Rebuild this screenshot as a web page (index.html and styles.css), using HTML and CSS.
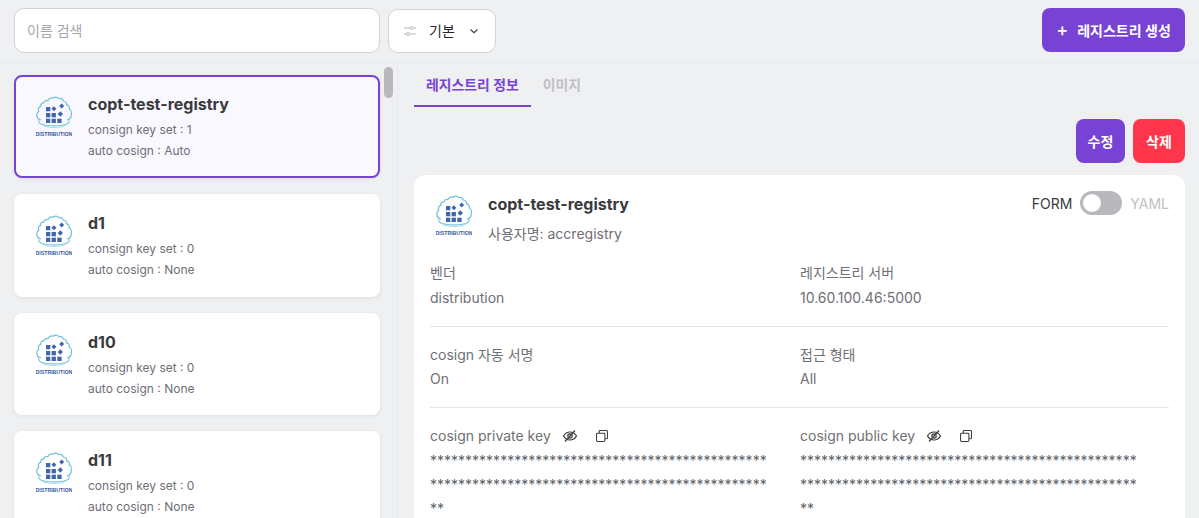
FILE: index.html
```html
<!DOCTYPE html>
<html lang="ko">
<head>
<meta charset="utf-8">
<title>레지스트리</title>
<link rel="stylesheet" href="styles.css">
</head>
<body>
<svg class="defs" width="0" height="0" aria-hidden="true">
  <symbol id="dist" viewBox="0 0 36 42">
    <path d="M5 24C2 23.500 .7 21 .8 18.500 .9 17 1.600 16 2.800 15.200 1.800 13.200 2.600 11 4.800 10.400 4.400 8.400 5.600 6.800 7.800 6.800 8.400 5 10 4.200 12 4.600 13 2.600 15 1.600 17 2.200 19 .8 21.400 1 22.800 2.600 24.800 2.200 26.600 3.200 27.200 5 29.400 5.200 30.800 6.800 30.600 8.800 32.600 9.200 33.800 11 33.200 13 35 14 36 16.500 35.200 18.500 35.400 21 33.600 23.400 31 24" fill="none" stroke="#6fbfdc" stroke-width="1.200"/>
    <path d="M3 24.500C1.500 28 8 29.800 18 29.800S34.500 28 33 24.500" fill="none" stroke="#7cc5df" stroke-width="1.200"/>
    <path d="M6.500 29.500C10 32 26 32 29.500 29.500" fill="none" stroke="#a5d8e8" stroke-width="1"/>
    <g fill="#3f66a8">
      <rect x="10" y="11" width="4.300" height="4.300"/>
      <rect x="16.200" y="11" width="3.500" height="3.500" transform="rotate(45 18 12.700)"/>
      <rect x="24" y="8.300" width="3.500" height="3.500" transform="rotate(45 25.700 10)"/>
      <rect x="10" y="17" width="4.300" height="4.300"/>
      <rect x="15.600" y="17" width="4.300" height="4.300"/>
      <rect x="22.400" y="16.100" width="3.800" height="3.800" transform="rotate(45 24.300 18)"/>
      <rect x="10" y="22.700" width="4.300" height="4.300"/>
      <rect x="15.600" y="22.700" width="4.300" height="4.300"/>
      <rect x="21.300" y="22.700" width="4.300" height="4.300"/>
    </g>
  </symbol>
</svg>

<header class="toolbar">
  <div class="search">이름 검색</div>
  <div class="select">
    <svg class="filter-icon" width="14" height="12" viewBox="0 0 14 12" fill="none" stroke="#b9b9bd" stroke-width="1">
      <path d="M1 3h6M10 3h3M1 9h2.500M6.500 9H13"/>
      <circle cx="8.500" cy="3" r="1.500"/><circle cx="5" cy="9" r="1.500"/>
    </svg>
    <span class="select-label">기본</span>
    <svg width="10" height="6" viewBox="0 0 10 6" fill="none" stroke="#3a3a3e" stroke-width="1.200"><path d="M1.500 1.500 5 4.600l3.500-3.100"/></svg>
  </div>
  <button class="btn btn-create"><span class="plus">+</span>레지스트리 생성</button>
</header>

<main class="content">
  <aside class="sidebar">
    <div class="list">
      <article class="item selected">
        <svg class="logo" viewBox="0 0 36 42"><use href="#dist"/><text x="18" y="40" text-anchor="middle" class="logo-text">DISTRIBUTION</text></svg>
        <div>
          <h3 class="item-name">copt-test-registry</h3>
          <p class="item-meta">consign key set : 1</p>
          <p class="item-meta">auto cosign : Auto</p>
        </div>
      </article>
      <article class="item">
        <svg class="logo" viewBox="0 0 36 42"><use href="#dist"/><text x="18" y="40" text-anchor="middle" class="logo-text">DISTRIBUTION</text></svg>
        <div>
          <h3 class="item-name">d1</h3>
          <p class="item-meta">consign key set : 0</p>
          <p class="item-meta">auto cosign : None</p>
        </div>
      </article>
      <article class="item">
        <svg class="logo" viewBox="0 0 36 42"><use href="#dist"/><text x="18" y="40" text-anchor="middle" class="logo-text">DISTRIBUTION</text></svg>
        <div>
          <h3 class="item-name">d10</h3>
          <p class="item-meta">consign key set : 0</p>
          <p class="item-meta">auto cosign : None</p>
        </div>
      </article>
      <article class="item">
        <svg class="logo" viewBox="0 0 36 42"><use href="#dist"/><text x="18" y="40" text-anchor="middle" class="logo-text">DISTRIBUTION</text></svg>
        <div>
          <h3 class="item-name">d11</h3>
          <p class="item-meta">consign key set : 0</p>
          <p class="item-meta">auto cosign : None</p>
        </div>
      </article>
    </div>
    <div class="scroll-track"><div class="scroll-thumb"></div></div>
  </aside>

  <section class="detail">
    <nav class="tabs">
      <div class="tab active">레지스트리 정보</div>
      <div class="tab">이미지</div>
    </nav>
    <div class="actions">
      <button class="btn btn-edit">수정</button>
      <button class="btn btn-delete">삭제</button>
    </div>
    <div class="card">
      <div class="card-head">
        <svg class="logo" viewBox="0 0 36 42"><use href="#dist"/><text x="18" y="40" text-anchor="middle" class="logo-text">DISTRIBUTION</text></svg>
        <div class="card-title">
          <h2 class="card-name">copt-test-registry</h2>
          <p class="card-user">사용자명: accregistry</p>
        </div>
        <div class="mode">
          <span>FORM</span>
          <span class="switch"><span class="knob"></span></span>
          <span class="mode-off">YAML</span>
        </div>
      </div>
      <div class="row row-first">
        <div class="field"><div class="label">벤더</div><div class="value">distribution</div></div>
        <div class="field"><div class="label">레지스트리 서버</div><div class="value">10.60.100.46:5000</div></div>
      </div>
      <div class="row row-second">
        <div class="field"><div class="label">cosign 자동 서명</div><div class="value">On</div></div>
        <div class="field"><div class="label">접근 형태</div><div class="value">All</div></div>
      </div>
      <div class="row row-keys">
        <div class="field">
          <div class="label key-label">cosign private key
            <svg class="eye" width="16" height="14" viewBox="0 0 16 14" fill="none" stroke="#3a3a3e" stroke-width="1.200"><path d="M1.500 7C3 4.400 5.300 3 8 3s5 1.400 6.500 4c-1.500 2.600-3.800 4-6.500 4S3 9.600 1.500 7Z"/><circle cx="8" cy="7" r="2.200"/><path d="M13 1.500 3 12.500"/></svg>
            <svg class="copy" width="12" height="12" viewBox="0 0 13 13" fill="none" stroke="#3a3a3e" stroke-width="1.100"><rect x=".6" y="3.400" width="9" height="9" rx="1"/><path d="M3.400 3.400V1.600a1 1 0 0 1 1-1h7a1 1 0 0 1 1 1v7a1 1 0 0 1-1 1H9.600"/></svg>
          </div>
          <div class="stars">**************************************************************************************************</div>
        </div>
        <div class="field">
          <div class="label key-label">cosign public key
            <svg class="eye" width="16" height="14" viewBox="0 0 16 14" fill="none" stroke="#3a3a3e" stroke-width="1.200"><path d="M1.500 7C3 4.400 5.300 3 8 3s5 1.400 6.500 4c-1.500 2.600-3.800 4-6.500 4S3 9.600 1.500 7Z"/><circle cx="8" cy="7" r="2.200"/><path d="M13 1.500 3 12.500"/></svg>
            <svg class="copy" width="12" height="12" viewBox="0 0 13 13" fill="none" stroke="#3a3a3e" stroke-width="1.100"><rect x=".6" y="3.400" width="9" height="9" rx="1"/><path d="M3.400 3.400V1.600a1 1 0 0 1 1-1h7a1 1 0 0 1 1 1v7a1 1 0 0 1-1 1H9.600"/></svg>
          </div>
          <div class="stars">**************************************************************************************************</div>
        </div>
      </div>
    </div>
  </section>
</main>
</body>
</html>
```

FILE: styles.css
```css
* { box-sizing: border-box; }
html, body { height: 100%; }
body {
  margin: 0;
  overflow: hidden;
  background: #eff0f2;
  color: #3a3a3e;
  font-family: Inter, "Noto Sans CJK KR", sans-serif;
  font-size: 14px;
  display: flex;
  flex-direction: column;
}
p, h2, h3 { margin: 0; }
.defs { position: absolute; }
.logo-text { font: 700 5.200px "Liberation Sans", sans-serif; fill: #34589c; }

.toolbar {
  flex: none;
  height: 63px;
  padding: 8px 14px 0;
  display: flex;
  align-items: flex-start;
  border-bottom: 1px solid #e9eaed;
}
.search {
  width: 366px;
  height: 45px;
  padding: 0 12px 2px;
  display: flex;
  align-items: center;
  background: #fff;
  border: 1px solid #d3d3d6;
  border-radius: 10px;
  color: #a5a5aa;
}
.select {
  width: 108px;
  height: 44px;
  margin: 1px 0 0 8px;
  padding: 0 16px 0 14px;
  display: flex;
  align-items: center;
  background: #fff;
  border: 1px solid #d3d3d6;
  border-radius: 10px;
  color: #27272b;
}
.select-label { margin: -2px auto 0 12px; }
.btn {
  border: 0;
  color: #fff;
  font: 600 14px Inter, "Noto Sans CJK KR", sans-serif;
  border-radius: 8px;
  padding: 0;
  height: 44px;
}
.btn-create {
  width: 143px;
  margin-left: auto;
  background: #7843d4;
  display: flex;
  align-items: center;
  justify-content: center;
}
.plus { font-size: 18px; font-weight: 500; margin-right: 9px; line-height: 1; }

.content { flex: 1; min-height: 0; display: flex; }
.sidebar {
  flex: none;
  width: 398px;
  display: flex;
  overflow: hidden;
  border-right: 1px solid #e9eaed;
}
.list {
  width: 380px;
  padding: 12.330px 0 0 14px;
  display: flex;
  flex-direction: column;
  gap: 16px;
  flex: none;
}
.item {
  flex: none;
  height: 102.670px;
  padding: 19px 20px 0 22px;
  display: flex;
  gap: 16px;
  background: #fff;
  border-radius: 8px;
  box-shadow: 0 1px 4px rgba(0, 0, 0, .07);
}
.item.selected {
  background: #faf8ff;
  border: 2px solid #7843d4;
  padding: 17px 20px 0 20px;
}
.item .logo { margin-top: 2px; }
.logo { flex: none; width: 36px; height: 42px; }
.item-name { font-size: 16px; font-weight: 700; line-height: 20px; margin-bottom: 5px; }
.item-meta { font-size: 12px; line-height: 21px; color: #6f6f76; }
.scroll-track { padding: 4px 0 0 4px; }
.scroll-thumb { width: 9px; height: 31px; border-radius: 5px; background: #b9b9bd; }

.detail {
  flex: 1;
  min-width: 0;
  padding: 0 14px 0 16px;
  display: flex;
  flex-direction: column;
}
.tabs { display: flex; height: 44px; flex: none; }
.tab {
  padding: 0 12px;
  height: 44px;
  line-height: 45px;
  font-weight: 600;
  font-size: 13.850px;
  color: #c0c0c4;
}
.tab.active { color: #7843d4; border-bottom: 2px solid #7843d4; }
.actions { flex: none; display: flex; justify-content: flex-end; gap: 8px; margin-top: 12px; }
.btn-edit { width: 49px; background: #7843d4; }
.btn-delete { width: 52px; background: #fe354b; }
.card {
  flex: none;
  margin-top: 12px;
  padding: 17px 16px 0;
  background: #fff;
  border-radius: 12px 12px 0 0;
}
.card-head { display: flex; gap: 16px; padding-left: 6px; height: 71px; }
.card-head .logo { margin-top: 3px; }
.card-title { flex: 1; }
.card-name { font-size: 16px; font-weight: 700; line-height: 24px; }
.card-user { margin-top: 9px; font-size: 14px; line-height: 18px; color: #6f6f76; }
.mode { display: flex; align-items: center; gap: 8px; height: 24px; margin-top: -1px; }
.mode-off { color: #c0c0c4; }
.switch { width: 42px; height: 24px; border-radius: 12px; background: #b9b9bd; padding: 3px; display: block; }
.knob { display: block; width: 18px; height: 18px; border-radius: 50%; background: #fff; }
.row {
  display: grid;
  grid-template-columns: 370px 1fr;
  padding: 18px 0;
  border-bottom: 1px solid #e6e6e9;
}
.row-first { padding-top: 0; }
.row-second .value { margin-top: 4px; }
.row-keys { border-bottom: 0; }
.label { line-height: 20px; color: #6f6f76; }
.value { margin-top: 5px; line-height: 20px; color: #6f6f76; }
.key-label { display: flex; align-items: center; }
.eye { margin-left: 11px; }
.copy { margin-left: 18px; }
.stars {
  width: 340px;
  margin-top: 3px;
  word-break: break-all;
  line-height: 24px;
  font-size: 14px;
  color: #5c5f66;
}
```
